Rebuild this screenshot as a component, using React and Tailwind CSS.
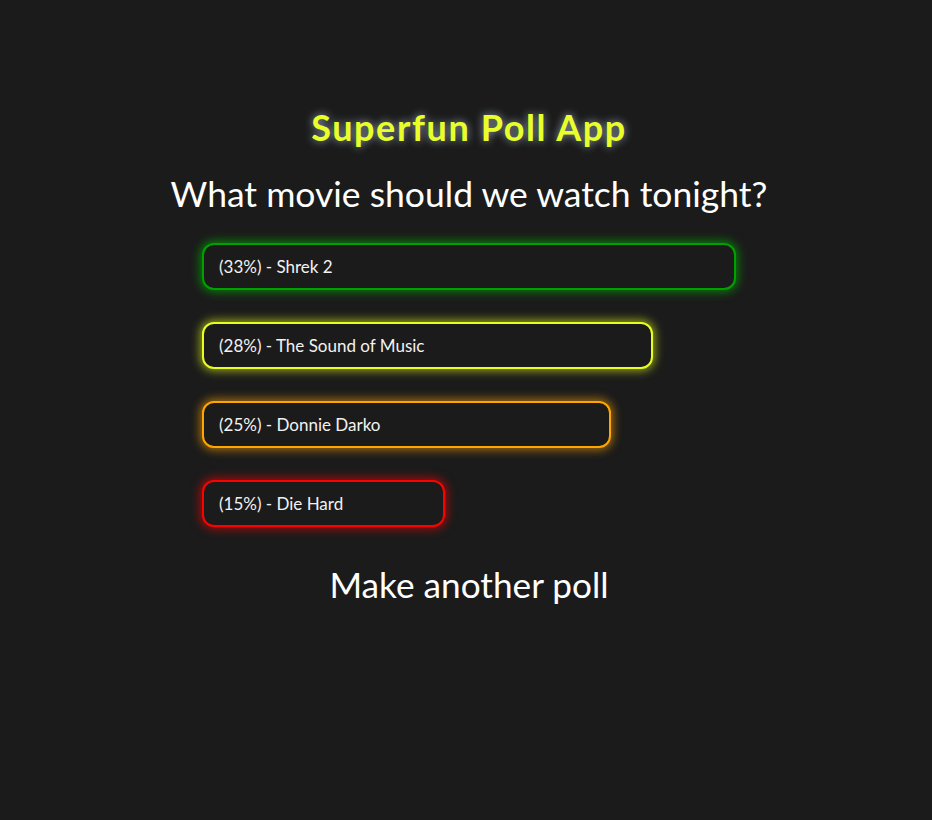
import React from "react";

const options = [
  { pct: 33, label: "Shrek 2", width: 534, cls: "border-[#00a000] shadow-[0_0_10px_2px_rgba(0,160,0,0.75)]" },
  { pct: 28, label: "The Sound of Music", width: 451, cls: "border-[#e8ff1c] shadow-[0_0_10px_2px_rgba(232,255,28,0.6)]" },
  { pct: 25, label: "Donnie Darko", width: 409, cls: "border-[#ffa500] shadow-[0_0_10px_2px_rgba(255,165,0,0.6)]" },
  { pct: 15, label: "Die Hard", width: 243, cls: "border-[#ff0000] shadow-[0_0_10px_2px_rgba(255,0,0,0.6)]" },
];

export default function App() {
  return (
    <div className="min-h-[820px] w-full bg-[#1b1b1b] text-white font-['Lato','Noto_Sans',sans-serif] flex flex-col items-center">
      <h1 className="mt-[104px] ml-[6px] text-[36px] leading-[46px] tracking-[1.6px] font-bold text-[#e8ff2a] [text-shadow:0_0_8px_rgba(190,210,230,0.75)]">
        Superfun Poll App
      </h1>
      <h2 className="mt-[22px] ml-[6px] text-[35.5px] leading-[44px] font-normal">
        What movie should we watch tonight?
      </h2>
      <div className="mt-[27px] w-[528px] flex flex-col gap-[32px]">
        {options.map((o) => (
          <div
            key={o.label}
            style={{ width: o.width }}
            className={`h-[47px] rounded-[12px] border-2 bg-[#1b1b1b] flex items-center pl-[15px] text-[17px] text-[#f2f2f2] ${o.cls}`}
          >
            ({o.pct}%) - {o.label}
          </div>
        ))}
      </div>
      <div className="mt-[35px] ml-[6px] text-[35.2px] leading-[44px]">Make another poll</div>
    </div>
  );
}
